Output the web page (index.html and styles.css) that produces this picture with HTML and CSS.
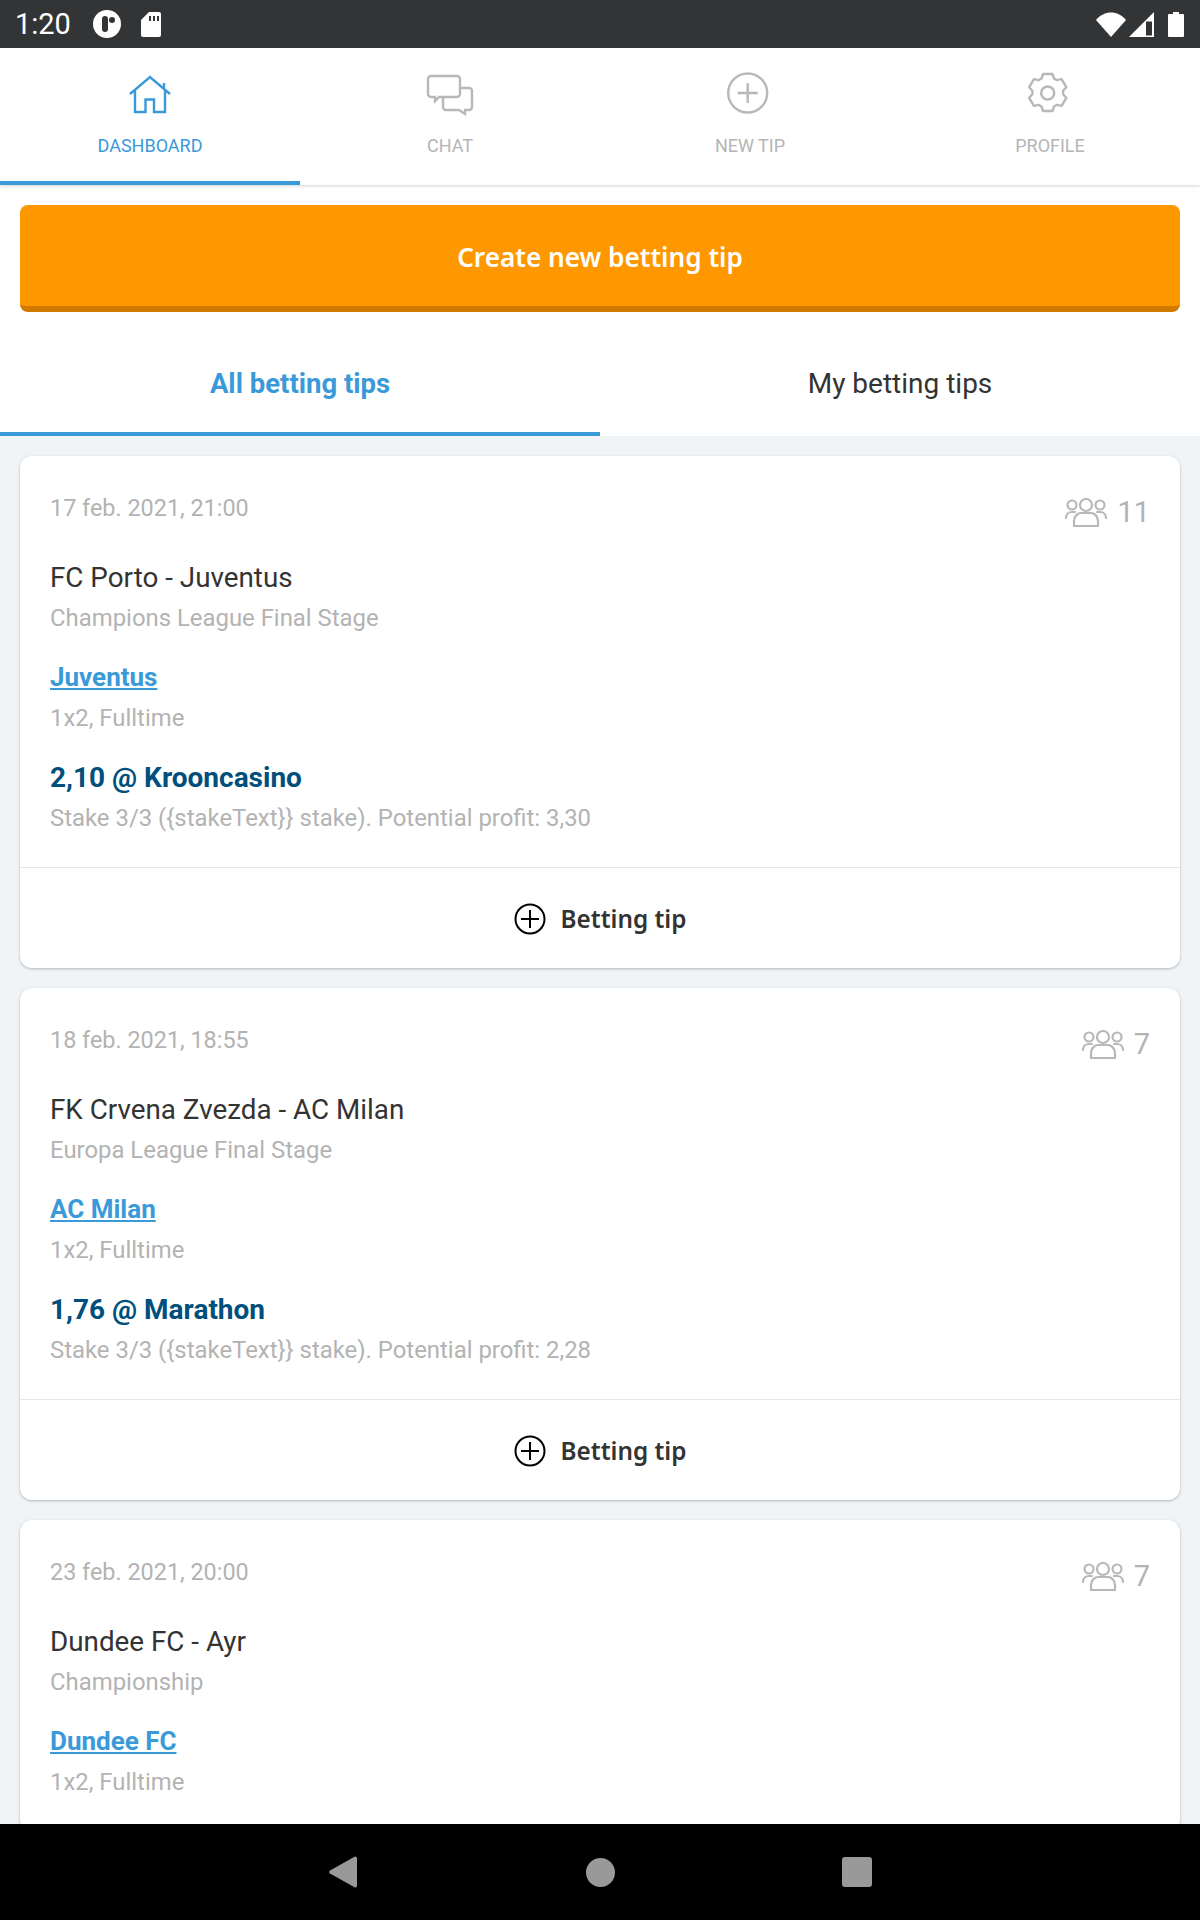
FILE: index.html
```html
<!DOCTYPE html>
<html lang="en">
<head>
    <meta charset="UTF-8">
    <meta name="viewport" content="width=device-width, initial-scale=1.0">
    <title>Dashboard - Betting tips</title>
    <link rel="stylesheet" href="styles.css">
</head>
<body>
    <!-- Shared icons -->
    <svg class="icon-defs" width="0" height="0">
        <symbol id="icon-people" viewBox="0 0 42 29">
            <circle cx="21" cy="7" r="6"/>
            <circle cx="7" cy="7" r="4.5"/>
            <circle cx="35" cy="7" r="4.5"/>
            <path d="M9 28h24v-5c0-5-4-8-7-8H16c-3 0-7 3-7 8z" stroke-linejoin="round"/>
            <path d="M1 20c0-4 3-6 6-6h3M41 20c0-4-3-6-6-6h-3" stroke-linecap="round"/>
        </symbol>
        <symbol id="icon-add" viewBox="0 0 32 32">
            <circle cx="16" cy="16" r="14.5"/>
            <path d="M16 7v18M7 16h18"/>
        </symbol>
    </svg>

    <div class="app">
        <!-- Android status bar -->
        <div class="status-bar">
            <div class="status-left">
                <span class="clock">1:20</span>
                <svg class="status-app" width="28" height="28" viewBox="0 0 28 28">
                    <circle cx="14" cy="14" r="14" fill="#fff"/>
                    <rect x="9" y="6" width="6" height="16" rx="3" fill="#333436"/>
                    <circle cx="19" cy="10" r="3" fill="#333436"/>
                </svg>
                <svg width="20" height="25" viewBox="0 0 20 25">
                    <path d="M8 0h10a2 2 0 0 1 2 2v21a2 2 0 0 1-2 2H2a2 2 0 0 1-2-2V8z" fill="#fff"/>
                    <path d="M8 4h2v5H8zM12 4h2v5h-2zM16 4h2v5h-2z" fill="#333436"/>
                </svg>
            </div>
            <div class="status-right">
                <svg width="30" height="25" viewBox="0 0 30 25">
                    <path d="M0 8C8-2 22-2 30 8L15 25z" fill="#fff"/>
                </svg>
                <svg width="25" height="25" viewBox="0 0 25 25">
                    <path d="M0 25L25 0v25z" fill="#fff"/>
                    <path d="M17 9.500h6V23.500h-6z" fill="#333436"/>
                </svg>
                <svg class="status-battery" width="16" height="25" viewBox="0 0 16 25">
                    <path d="M5 0h6v2h4a1 1 0 0 1 1 1v21a1 1 0 0 1-1 1H1a1 1 0 0 1-1-1V3a1 1 0 0 1 1-1h4z" fill="#fff"/>
                </svg>
            </div>
        </div>

        <!-- Main navigation -->
        <header class="main-nav">
            <a class="nav-item active" href="#">
                <svg width="48" height="46" viewBox="125 72 48 46">
                    <path d="M129 94l20-17 20 17M134 90v22h10.500V99.500h8.500V112h11V90M163 83v5"/>
                </svg>
                <span>DASHBOARD</span>
            </a>
            <a class="nav-item" href="#">
                <svg width="48" height="46" viewBox="425 72 48 46">
                    <path d="M430 76h26a3 3 0 0 1 3 3v15a3 3 0 0 1-3 3h-18l-4 4v-4h-4a3 3 0 0 1-3-3V79a3 3 0 0 1 3-3z"/>
                    <path d="M459 88h9a3 3 0 0 1 3 3v16a3 3 0 0 1-3 3h-4v4l-6-4h-13a3 3 0 0 1-3-3v-10"/>
                </svg>
                <span>CHAT</span>
            </a>
            <a class="nav-item" href="#">
                <svg width="48" height="46" viewBox="725 72 48 46">
                    <circle cx="746.700" cy="93" r="19.500"/>
                    <path d="M746.700 83v20M736.700 93h20"/>
                </svg>
                <span>NEW TIP</span>
            </a>
            <a class="nav-item" href="#">
                <svg width="48" height="46" viewBox="1025 72 48 46">
                    <circle cx="1046.700" cy="93" r="6.500"/>
                    <path d="M1042 74h9.500l1.500 4.500 3 1.700 4.600-1 4.700 8-3.200 3.500v3.600l3.200 3.500-4.700 8-4.600-1-3 1.700-1.500 4.500H1042l-1.500-4.500-3-1.700-4.600 1-4.700-8 3.200-3.500v-3.600l-3.200-3.500 4.700-8 4.600 1 3-1.700z" stroke-linejoin="round"/>
                </svg>
                <span>PROFILE</span>
            </a>
        </header>

        <main class="content">
            <div class="create-wrap">
                <button class="create-btn">Create new betting tip</button>
            </div>

            <div class="tip-tabs">
                <a class="tip-tab active" href="#">All betting tips</a>
                <a class="tip-tab" href="#">My betting tips</a>
            </div>

            <section class="tip-list">
                <!-- Tip 1 -->
                <article class="tip-card">
                    <div class="tip-body">
                        <div class="tip-head">
                            <span class="tip-date">17 feb. 2021, 21:00</span>
                            <span class="tip-count">
                                <svg class="people"><use href="#icon-people"/></svg>11
                            </span>
                        </div>
                        <div class="tip-block">
                            <div class="tip-match">FC Porto - Juventus</div>
                            <div class="tip-note">Champions League Final Stage</div>
                        </div>
                        <div class="tip-block">
                            <a class="tip-pick" href="#">Juventus</a>
                            <div class="tip-note">1x2, Fulltime</div>
                        </div>
                        <div class="tip-block">
                            <div class="tip-odds">2,10 @ Krooncasino</div>
                            <div class="tip-note">Stake 3/3 ({stakeText}} stake). Potential profit: 3,30</div>
                        </div>
                    </div>
                    <div class="tip-foot">
                        <svg class="add"><use href="#icon-add"/></svg>
                        <span>Betting tip</span>
                    </div>
                </article>

                <!-- Tip 2 -->
                <article class="tip-card">
                    <div class="tip-body">
                        <div class="tip-head">
                            <span class="tip-date">18 feb. 2021, 18:55</span>
                            <span class="tip-count">
                                <svg class="people"><use href="#icon-people"/></svg>7
                            </span>
                        </div>
                        <div class="tip-block">
                            <div class="tip-match">FK Crvena Zvezda - AC Milan</div>
                            <div class="tip-note">Europa League Final Stage</div>
                        </div>
                        <div class="tip-block">
                            <a class="tip-pick" href="#">AC Milan</a>
                            <div class="tip-note">1x2, Fulltime</div>
                        </div>
                        <div class="tip-block">
                            <div class="tip-odds">1,76 @ Marathon</div>
                            <div class="tip-note">Stake 3/3 ({stakeText}} stake). Potential profit: 2,28</div>
                        </div>
                    </div>
                    <div class="tip-foot">
                        <svg class="add"><use href="#icon-add"/></svg>
                        <span>Betting tip</span>
                    </div>
                </article>

                <!-- Tip 3 -->
                <article class="tip-card">
                    <div class="tip-body">
                        <div class="tip-head">
                            <span class="tip-date">23 feb. 2021, 20:00</span>
                            <span class="tip-count">
                                <svg class="people"><use href="#icon-people"/></svg>7
                            </span>
                        </div>
                        <div class="tip-block">
                            <div class="tip-match">Dundee FC - Ayr</div>
                            <div class="tip-note">Championship</div>
                        </div>
                        <div class="tip-block">
                            <a class="tip-pick" href="#">Dundee FC</a>
                            <div class="tip-note">1x2, Fulltime</div>
                        </div>
                    </div>
                </article>
            </section>
        </main>

        <!-- Android navigation bar -->
        <footer class="system-nav">
            <div class="system-key">
                <svg width="28" height="32" viewBox="0 0 28 32">
                    <path d="M26 0.500a2 2 0 0 1 2 1.500v28a2 2 0 0 1-2 1.500L1 17.500a2 2 0 0 1 0-3z" fill="#999"/>
                </svg>
            </div>
            <div class="system-key"><span class="key-circle"></span></div>
            <div class="system-key"><span class="key-square"></span></div>
        </footer>
    </div>
</body>
</html>
```

FILE: styles.css
```css
/* Global Styles */
body {
    font-family: 'Roboto', sans-serif;
    margin: 0;
    padding: 0;
    background-color: #f0f4f7;
    color: #333;
}

a {
    text-decoration: none;
    color: inherit;
}

.icon-defs {
    position: absolute;
}

.app {
    display: flex;
    flex-direction: column;
    height: 1920px;
    overflow: hidden;
}

/* Status Bar */
.status-bar {
    flex: none;
    height: 48px;
    background-color: #333436;
    display: flex;
    justify-content: space-between;
    align-items: center;
    padding: 0 16px 0 15px;
}

.status-left,
.status-right {
    display: flex;
    align-items: center;
}

.status-left {
    gap: 20px;
}

.status-right {
    gap: 3px;
}

.clock {
    color: #fff;
    font-size: 29px;
    font-weight: 400;
    margin-right: 2px;
}

.status-battery {
    margin-left: 11px;
}

/* Main Navigation */
.main-nav {
    flex: none;
    height: 137px;
    display: flex;
    background-color: #fff;
    box-shadow: 0 1px 3px rgba(0, 0, 0, 0.18);
    position: relative;
}

.nav-item {
    flex: 1;
    display: flex;
    flex-direction: column;
    align-items: center;
    padding-top: 24px;
    box-sizing: border-box;
    color: #b5b5b5;
    font-size: 18px;
}

.nav-item svg {
    fill: none;
    stroke: #b8b8b8;
    stroke-width: 2.400;
}

.nav-item span {
    margin-top: 17px;
    line-height: 21px;
}

.nav-item.active {
    color: #3a9ad9;
    border-bottom: 4px solid #3a9ad9;
}

.nav-item.active svg {
    stroke: #3a9ad9;
}

/* Create Button */
.content {
    flex: 1;
    overflow: hidden;
}

.create-wrap {
    background-color: #fff;
    padding: 20px 20px 0;
}

.create-btn {
    display: block;
    width: 100%;
    height: 107px;
    padding-top: 4px;
    background-color: #ff9800;
    color: #fff;
    border: none;
    border-bottom: 6px solid #d27a00;
    border-radius: 8px;
    font-family: 'Noto Sans', sans-serif;
    font-size: 26.200px;
    font-weight: 600;
}

/* Tip Tabs */
.tip-tabs {
    display: flex;
    background-color: #fff;
    height: 124px;
}

.tip-tab {
    flex: 1;
    display: flex;
    align-items: center;
    justify-content: center;
    font-size: 28px;
    padding-top: 22px;
    box-sizing: border-box;
    border-bottom: 4px solid transparent;
}

.tip-tab.active {
    color: #3a9ad9;
    font-size: 27.500px;
    font-weight: 700;
    border-bottom-color: #3a9ad9;
}

/* Tip Cards */
.tip-list {
    display: flex;
    flex-direction: column;
    gap: 20px;
    padding: 20px;
}

.tip-card {
    flex: none;
    background-color: #fff;
    border-radius: 12px;
    box-shadow: 0 1px 3px rgba(0, 0, 0, 0.25);
}

.tip-body {
    padding: 32px 30px 29px;
}

.tip-head {
    display: flex;
    justify-content: space-between;
    height: 40px;
}

.tip-date {
    font-size: 23.400px;
    line-height: 40px;
    color: #b3b3b3;
}

.tip-count {
    display: flex;
    align-items: center;
    gap: 10px;
    margin-top: 4px;
    height: 40px;
    font-size: 29px;
    color: #b3b3b3;
}

.people {
    width: 42px;
    height: 29px;
    fill: none;
    stroke: #b8b8b8;
    stroke-width: 2.200;
}

.tip-block {
    margin-top: 20px;
}

.tip-head + .tip-block {
    margin-top: 30px;
}

.tip-match {
    font-size: 27.800px;
    line-height: 40px;
    color: #333;
}

.tip-note {
    font-size: 23.900px;
    line-height: 40px;
    color: #b3b3b3;
}

.tip-pick {
    display: block;
    width: fit-content;
    font-size: 26px;
    font-weight: 700;
    line-height: 38px;
    padding-bottom: 2px;
    color: #3a9ad9;
    text-decoration: underline;
}

.tip-odds {
    font-size: 28px;
    font-weight: 700;
    line-height: 40px;
    color: #004f7c;
}

.tip-foot {
    height: 101px;
    padding-top: 1px;
    box-sizing: border-box;
    border-top: 1px solid #e6e6e6;
    display: flex;
    align-items: center;
    justify-content: center;
    gap: 15px;
    font-family: 'Noto Sans', sans-serif;
    font-size: 24.300px;
    font-weight: 600;
    color: #333;
}

.add {
    width: 32px;
    height: 32px;
    fill: none;
    stroke: #000;
    stroke-width: 2;
}

/* System Navigation */
.system-nav {
    flex: none;
    height: 96px;
    background-color: #000;
    display: flex;
    justify-content: center;
    align-items: center;
}

.system-key {
    width: 257px;
    display: flex;
    justify-content: center;
}

.key-circle {
    width: 29px;
    height: 29px;
    border-radius: 50%;
    background-color: #999;
}

.key-square {
    width: 30px;
    height: 30px;
    border-radius: 3px;
    background-color: #999;
}
```
